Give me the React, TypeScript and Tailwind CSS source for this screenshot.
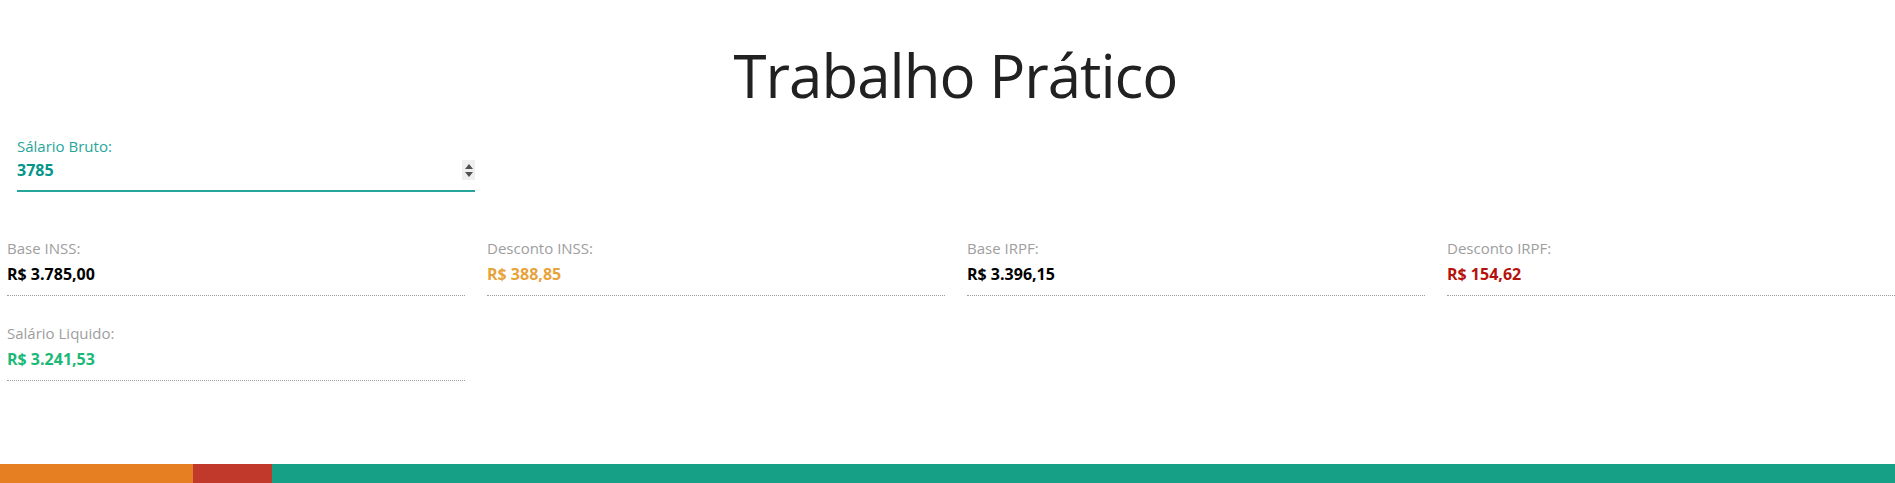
import { useState } from "react";

type Field = { label: string; value: string; color: string };

const fields: Field[] = [
  { label: "Base INSS:", value: "R$ 3.785,00", color: "text-black" },
  { label: "Desconto INSS:", value: "R$ 388,85", color: "text-[#e8a23a]" },
  { label: "Base IRPF:", value: "R$ 3.396,15", color: "text-black" },
  { label: "Desconto IRPF:", value: "R$ 154,62", color: "text-[#b5120c]" },
];

const ReadOnlyField = ({ label, value, color }: Field) => (
  <div className="w-[458px] shrink-0">
    <div className="text-[15px] leading-[18px] text-[#9e9e9e]">{label}</div>
    <div className={`mt-[8px] text-[16px] leading-[18px] font-bold ${color}`}>{value}</div>
    <div className="mt-[12px] border-b border-dotted border-[#9e9e9e]" />
  </div>
);

export default function App() {
  const [salary, setSalary] = useState("3785");

  return (
    <div
      className="relative h-[483px] w-full overflow-hidden bg-white"
      style={{ fontFamily: '"Open Sans", "Noto Sans", sans-serif' }}
    >
      <h1 className="pt-[35px] pl-[16px] text-center text-[60px] leading-[80px] text-[#212121] tracking-[-1px]">
        Trabalho Prático
      </h1>

      <div className="ml-[17px] mt-[22px] w-[458px]">
        <label className="block text-[15px] leading-[18px] text-[#26a69a]">Sálario Bruto:</label>
        <div className="flex items-center border-b-2 border-[#26a69a] pt-[5px] pb-[10px]">
          <input
            type="number"
            value={salary}
            onChange={(e) => setSalary(e.target.value)}
            className="flex-1 bg-transparent text-[16px] leading-[18px] font-bold text-[#00968a] outline-none [appearance:textfield] [&::-webkit-inner-spin-button]:appearance-none"
          />
          <div className="flex h-[20px] w-[13px] flex-col items-center justify-center gap-[3px] bg-[#efefef]">
            <span className="block h-0 w-0 border-x-[4px] border-b-[5px] border-x-transparent border-b-[#505050]" />
            <span className="block h-0 w-0 border-x-[4px] border-t-[5px] border-x-transparent border-t-[#505050]" />
          </div>
        </div>
      </div>

      <div className="mt-[47px] ml-[7px] flex gap-[22px]">
        {fields.map((f) => (
          <ReadOnlyField key={f.label} {...f} />
        ))}
      </div>

      <div className="mt-[28px] ml-[7px] flex gap-[22px]">
        <ReadOnlyField label="Salário Liquido:" value="R$ 3.241,53" color="text-[#1bb978]" />
      </div>

      <div className="absolute bottom-0 left-0 flex h-[19px] w-full">
        <div className="w-[193px] bg-[#e67e22]" />
        <div className="w-[79px] bg-[#c0392b]" />
        <div className="flex-1 bg-[#16a085]" />
      </div>
    </div>
  );
}
